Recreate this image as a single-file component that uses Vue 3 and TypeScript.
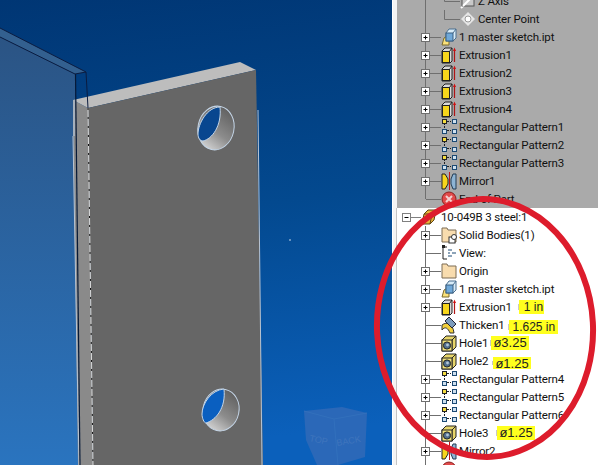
<script setup lang="ts">
type Kind = 'axis' | 'point' | 'link' | 'extrude' | 'pattern' | 'mirror' | 'eop' | 'solids' | 'view' | 'folder' | 'thicken' | 'hole'
interface Note { text: string; cls: string }
interface Row { label: string; kind: Kind; expand?: boolean; deep?: boolean; note?: Note; last?: boolean }

const upper: Row[] = [
  { label: 'Z Axis', kind: 'axis', deep: true },
  { label: 'Center Point', kind: 'point', deep: true },
  { label: '1 master sketch.ipt', kind: 'link', expand: true },
  { label: 'Extrusion1', kind: 'extrude', expand: true },
  { label: 'Extrusion2', kind: 'extrude', expand: true },
  { label: 'Extrusion3', kind: 'extrude', expand: true },
  { label: 'Extrusion4', kind: 'extrude', expand: true },
  { label: 'Rectangular Pattern1', kind: 'pattern', expand: true },
  { label: 'Rectangular Pattern2', kind: 'pattern', expand: true },
  { label: 'Rectangular Pattern3', kind: 'pattern', expand: true },
  { label: 'Mirror1', kind: 'mirror', expand: true },
  { label: 'End of Part', kind: 'eop', last: true },
]
const lower: Row[] = [
  { label: 'Solid Bodies(1)', kind: 'solids', expand: true },
  { label: 'View:', kind: 'view' },
  { label: 'Origin', kind: 'folder', expand: true },
  { label: '1 master sketch.ipt', kind: 'link', expand: true },
  { label: 'Extrusion1', kind: 'extrude', expand: true, note: { text: '1 in', cls: 'n-in' } },
  { label: 'Thicken1', kind: 'thicken', note: { text: '1.625 in', cls: 'n-thick' } },
  { label: 'Hole1', kind: 'hole', note: { text: 'ø3.25', cls: 'n-h1' } },
  { label: 'Hole2', kind: 'hole', note: { text: 'ø1.25', cls: 'n-h2' } },
  { label: 'Rectangular Pattern4', kind: 'pattern', expand: true },
  { label: 'Rectangular Pattern5', kind: 'pattern', expand: true },
  { label: 'Rectangular Pattern6', kind: 'pattern', expand: true },
  { label: 'Hole3', kind: 'hole', note: { text: 'ø1.25', cls: 'n-h3' } },
  { label: 'Mirror2', kind: 'mirror', expand: true },
  { label: '', kind: 'eop', last: true },
]
const sections = [
  { cls: 'grey', rows: upper },
  { cls: 'white', rows: lower },
]
</script>

<template>
  <div class="page">
    <svg class="scene" width="392" height="465" viewBox="0 0 392 465">
      <defs>
        <linearGradient id="sky" x1="0" y1="0" x2="0.1" y2="1">
          <stop offset="0" stop-color="#003674" />
          <stop offset="0.5" stop-color="#03498f" />
          <stop offset="1" stop-color="#0b60bb" />
        </linearGradient>
        <linearGradient id="glass" x1="0" y1="0" x2="0" y2="1">
          <stop offset="0" stop-color="#2b5484" />
          <stop offset="1" stop-color="#2a74bf" />
        </linearGradient>
        <linearGradient id="bore" x1="0.8" y1="0" x2="0.4" y2="1">
          <stop offset="0" stop-color="#5c5c5c" />
          <stop offset="0.6" stop-color="#8c8c8c" />
          <stop offset="1" stop-color="#cfcfcf" />
        </linearGradient>
      </defs>
      <rect width="392" height="465" fill="url(#sky)" />
      <polygon points="0,37 75,74 80,465 0,465" fill="url(#glass)" />
      <polygon points="0,28 86,72 75,74 0,37" fill="#33608f" />
      <polygon points="73,100 88,108 93,465 78,465" fill="#8a8a8a" />
      <polygon points="73,100 240,62 256,70 88,108" fill="#bdbdbd" />
      <polygon points="88,108 256,70 263,465 93,465" fill="#666666" />
      <polygon points="73,100 75,100 75,136 73,136" fill="#a6b0bc" />
      <path d="M73 136L79 465M258 110L262 465" stroke="#b9c4d2" stroke-width="1" fill="none" />
      <path d="M75.5 74L80 465" stroke="#071a38" stroke-width="1.2" fill="none" />
      <path d="M0 28L86 72L75 74L0 37M86 72L88 108" stroke="#0b1c40" stroke-width="1" fill="none" />
      <path d="M88 108L93 465" stroke="#d8d8d8" stroke-width="1" fill="none" />
      <path d="M88 108L93 465" stroke="#111" stroke-width="1" stroke-dasharray="2 7" fill="none" />

      <ellipse cx="216" cy="128" rx="18" ry="22" transform="rotate(12 216 128)" fill="url(#bore)" stroke="#c5d6e8" />
      <path d="M220 107C207 107 198 124 198 134C198 138 200 141 203 141C212 139 222 126 220 107Z" fill="#08468f" stroke="#c5d6e8" />
      <ellipse cx="221" cy="410" rx="18" ry="21" transform="rotate(12 221 410)" fill="url(#bore)" stroke="#c5d6e8" />
      <path d="M224 389C211 390 202 404 202 414C202 418 204 423 206 423C216 420 226 408 224 389Z" fill="#0a5fc0" stroke="#c5d6e8" />

      <circle cx="290" cy="240" r="0.8" fill="#dfe8f4" />
      <polygon points="304,411 342,407 367,413 365,457 338,465 317,465 306,440" fill="#2b68b8" />
      <path d="M304 411L334 419L367 413M334 419L338 465" stroke="#3270bc" fill="none" />
      <text x="309" y="441" class="cube-txt" transform="rotate(12 309 441)">TOP</text>
      <text x="337" y="446" class="cube-txt" transform="rotate(-10 337 446)">BACK</text>
    </svg>

    <div class="panel">
      <div v-for="s in sections" :key="s.cls" :class="['section', s.cls]">
        <div v-if="s.cls === 'white'" class="row">
          <svg class="conn" width="24" height="18">
            <path d="M14 9.5H24" stroke="#808080" fill="none" />
            <rect x="5.5" y="5.5" width="8" height="8" fill="#fff" stroke="#808080" />
            <path d="M7.5 9.5H11.5" stroke="#000" fill="none" />
          </svg>
          <svg class="ico" width="17" height="18" viewBox="0 0 17 18">
            <path d="M1 16L3 6L7 2H15L13 12L9 16Z" fill="#e8b23a" stroke="#5b4314" />
            <path d="M3 6H11L9 16M11 6L15 2" fill="none" stroke="#5b4314" />
            <path d="M5 13L12 4" stroke="#f4e48a" stroke-width="2" />
          </svg>
          <span class="label root-label">10-049B 3 steel:1</span>
        </div>
        <div v-for="r in s.rows" :key="r.label + r.kind" class="row">
          <svg class="conn" :width="r.deep ? 63 : 44" height="18">
            <path :d="r.last ? 'M28.5 0V9' : 'M28.5 0V18'" stroke="#6f6f6f" fill="none" />
            <path v-if="r.deep" d="M47.5 0V9.5H63" stroke="#6f6f6f" fill="none" />
            <path v-else d="M29 9.5H44" stroke="#6f6f6f" fill="none" />
            <template v-if="r.expand">
              <rect x="24.5" y="5.5" width="8" height="8" fill="#fff" stroke="#6f6f6f" />
              <path d="M26.5 9.5H30.5M28.5 7.5V11.5" stroke="#000" fill="none" />
            </template>
          </svg>

          <svg class="ico" width="16" height="18" viewBox="0 0 16 18">
            <template v-if="r.kind === 'axis'">
              <path d="M1 16L15 2" stroke="#fff" stroke-width="2" />
              <rect x="2" y="2" width="12" height="12" fill="#c8c8c8" stroke="#555" />
              <path d="M3 14L14 3" stroke="#fff" stroke-width="2" />
            </template>
            <template v-else-if="r.kind === 'point'">
              <path d="M8 2L15 9L8 16L1 9Z" fill="#e6e6e6" />
              <circle cx="8" cy="9" r="3" fill="#fff" stroke="#999" />
            </template>
            <template v-else-if="r.kind === 'link'">
              <path d="M1 17L3 10L8 7V17Z" fill="#fbe27a" stroke="#7a6a2a" />
              <path d="M5 5L8 1H15V10L12 13H5Z" fill="#d8ecf8" stroke="#4b6f8f" />
              <rect x="5" y="5" width="7" height="8" fill="#6fa8d8" stroke="#3a5f80" />
              <path d="M12 5L15 1" stroke="#4b6f8f" />
            </template>
            <template v-else-if="r.kind === 'extrude'">
              <path d="M1 5L4 2H11V15L9 17H1Z" fill="#d9d9d9" stroke="#222" />
              <rect x="1.5" y="5.5" width="7" height="11" fill="#f7d61c" stroke="#222" />
              <path d="M8.5 5.5L11 2" stroke="#222" fill="none" />
              <path d="M13.5 16V4" stroke="#b01414" stroke-width="1.2" />
              <path d="M12 5L13.5 1.5L15 5Z" fill="#d01010" />
            </template>
            <template v-else-if="r.kind === 'pattern'">
              <path d="M3.5 5V14M6 3.5H10M6 12.5H10" stroke="#222" stroke-dasharray="2 1" fill="none" />
              <rect x="1.5" y="1.5" width="4" height="4" fill="#f5dd40" stroke="#222" />
              <rect x="11.5" y="1.5" width="4" height="4" fill="#cfe0ee" stroke="#1c4a74" />
              <rect x="1.5" y="11.5" width="4" height="4" fill="#cfe0ee" stroke="#1c4a74" />
              <rect x="11.5" y="11.5" width="4" height="4" fill="#cfe0ee" stroke="#1c4a74" />
            </template>
            <template v-else-if="r.kind === 'mirror'">
              <path d="M1 2H4L7 7V12L4 17H1Z" fill="#f7d61c" stroke="#222" />
              <path d="M15 2H12L10 7V12L12 17H15Z" fill="#8db4d4" stroke="#223c55" />
              <path d="M8.5 0V18" stroke="#c01818" />
            </template>
            <template v-else-if="r.kind === 'eop'">
              <circle cx="8" cy="9" r="7" fill="#e04a4a" stroke="#8a2020" />
              <path d="M5 6L11 12M11 6L5 12" stroke="#f4d0d0" stroke-width="2" />
            </template>
            <template v-else-if="r.kind === 'solids'">
              <path d="M1 2H6L7 4H15V16H1Z" fill="#f8dcae" stroke="#7c6c55" />
              <rect x="8" y="11" width="6" height="6" fill="#fff" stroke="#333" />
              <circle cx="13" cy="11" r="2.5" fill="#fff" stroke="#333" />
            </template>
            <template v-else-if="r.kind === 'view'">
              <path d="M2 3V15M2 3H6M2 15H6" stroke="#222" fill="none" />
              <rect x="1" y="1" width="3" height="3" fill="#222" />
              <path d="M7 6H11M7 9H9M11 9H15M7 12H11" stroke="#1c4a74" stroke-width="1.2" />
            </template>
            <template v-else-if="r.kind === 'folder'">
              <path d="M1 2H6L7 4H15V16H1Z" fill="#f8dcae" stroke="#7c6c55" />
            </template>
            <template v-else-if="r.kind === 'thicken'">
              <path d="M1 14C4 10 7 12 9 17H13C12 8 6 5 1 9Z" fill="#f2cf3a" stroke="#333" />
              <path d="M4 5L8 1L15 8L11 12Z" fill="#7d9cbc" stroke="#223" />
            </template>
            <template v-else-if="r.kind === 'hole'">
              <path d="M1 6L5 2H15V13L11 17H1Z" fill="#e8d66a" stroke="#222" />
              <path d="M11 6L15 2M11 6V17" stroke="#222" fill="none" />
              <rect x="1" y="6" width="10" height="11" fill="#f2e27a" stroke="#222" />
              <circle cx="6" cy="11.5" r="3.6" fill="#51708f" stroke="#222" />
              <circle cx="6.5" cy="11" r="1.4" fill="#b7c7d6" />
            </template>
          </svg>

          <span v-if="r.label" class="label">{{ r.label }}</span>
          <span v-if="r.note" :class="['note', r.note.cls]">{{ r.note.text }}</span>
        </div>
      </div>
    </div>

    <svg class="ring" width="598" height="465" viewBox="0 0 598 465">
      <ellipse cx="485" cy="328" rx="108" ry="129" transform="rotate(-3 485 328)" fill="none" stroke="#dd1c2c" stroke-width="6" />
    </svg>
  </div>
</template>

<style scoped>
.page {
  position: relative;
  display: flex;
  width: 598px;
  height: 465px;
  overflow: hidden;
  background: #fff;
  font-family: "Roboto", "Noto Sans", sans-serif;
}
.scene {
  flex: none;
  display: block;
}
.cube-txt {
  font-size: 9px;
  font-family: "Liberation Sans", sans-serif;
  fill: #3f75bd;
}
.panel {
  flex: none;
  width: 206px;
  margin-left: 1px;
  padding-left: 4px;
  box-sizing: border-box;
  background: #f4f4f4;
}
.section {
  overflow: hidden;
}
.grey {
  background: #aaaaaa;
  margin-top: -8px;
}
.white {
  background: #fff;
  border-left: 1px solid #c4c4c4;
  margin-left: -1px;
  height: 265px;
}
.row {
  display: flex;
  align-items: center;
  height: 18px;
  white-space: nowrap;
}
.conn,
.ico {
  flex: none;
  display: block;
}
.label {
  margin-left: 2px;
  padding-top: 1px;
  font-size: 11.5px;
  letter-spacing: -0.15px;
  color: #111;
  line-height: 17px;
}
.root-label {
  margin-left: 3px;
}
.note {
  background: #ffff1e;
  color: #222;
  font-family: "Liberation Sans", sans-serif;
  font-size: 12px;
  line-height: 14px;
  white-space: nowrap;
  box-shadow: -5px 0 0 -4px #c8c8c8;
}
.n-in { margin-left: 7px; padding: 0 5px; width: 15px; }
.n-thick { margin-left: 5px; padding: 0 3px; margin-top: 3px; }
.n-h1 { margin-left: 3px; padding: 0 2px; font-size: 13px; }
.n-h2 { margin-left: 5px; padding: 0 2px; font-size: 13px; margin-top: 4px; height: 12px; overflow: hidden; }
.n-h3 { margin-left: 9px; padding: 0 2px; font-size: 13px; }
.ring {
  position: absolute;
  left: 0;
  top: 0;
  pointer-events: none;
}
</style>
<style>
html, body { overflow: hidden; background: #fff; }
</style>
